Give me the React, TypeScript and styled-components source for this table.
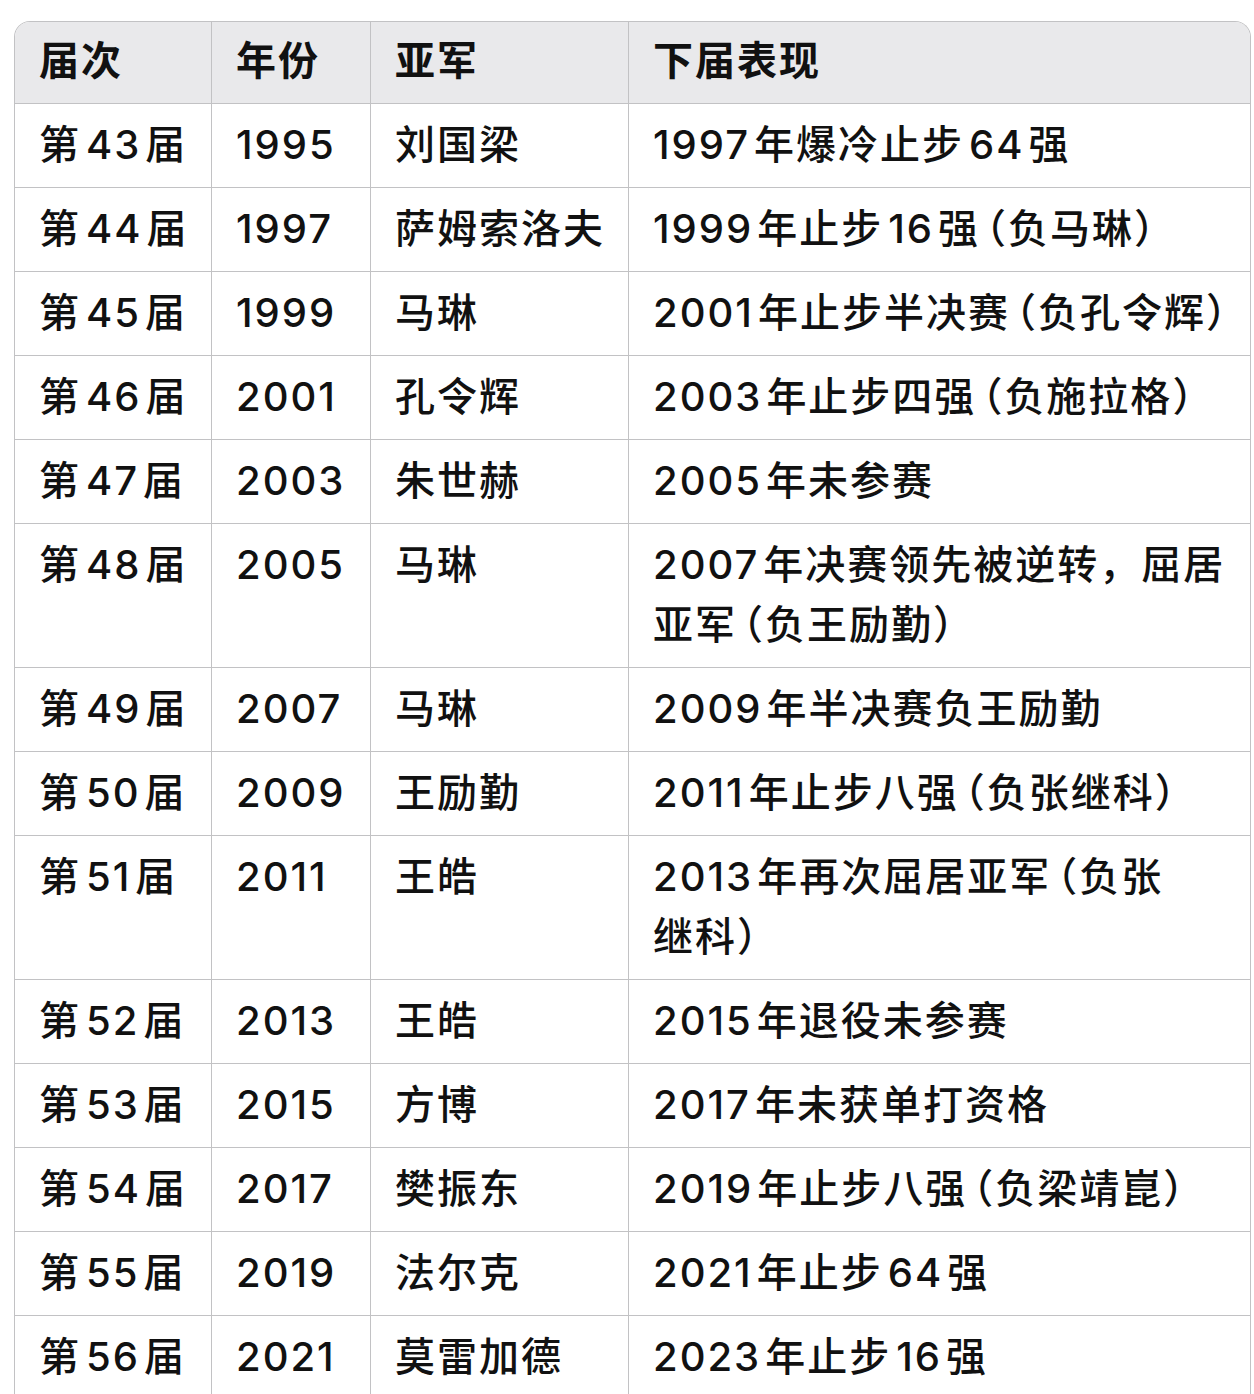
import React from "react";
import styled, { createGlobalStyle } from "styled-components";

const Global = createGlobalStyle`
  html, body { margin: 0; padding: 0; background: #ffffff; }
  body {
    font-family: "Inter", "Noto Sans CJK SC", "Noto Sans", sans-serif;
    color: #111111;
    -webkit-font-smoothing: antialiased;
  }
`;

const Page = styled.div`
  padding: 21px 4px 0 14px;
`;

const Table = styled.table`
  width: 1237px;
  table-layout: fixed;
  border-collapse: separate;
  border-spacing: 0;
  border: 1px solid #c2c2c4;
  border-bottom: none;
  border-radius: 16px 16px 0 0;
  overflow: hidden;
  font-size: 40px;
  line-height: 60px;
  letter-spacing: 2px;
`;

const Col = styled.col<{ $w?: number }>`
  width: ${(p) => (p.$w ? `${p.$w}px` : "auto")};
`;

const HeadCell = styled.th<{ $last?: boolean }>`
  background: #e9e9eb;
  text-align: left;
  font-weight: 700;
  padding: 9px 16px 12px 24px;
  border-bottom: 1px solid #c2c2c4;
  border-right: ${(p) => (p.$last ? "none" : "1px solid #c2c2c4")};
  vertical-align: middle;
`;

const Cell = styled.td<{ $last?: boolean }>`
  text-align: left;
  font-weight: 500;
  padding: 11px 14px 12px 24px;
  border-bottom: 1px solid #c2c2c4;
  border-right: ${(p) => (p.$last ? "none" : "1px solid #c2c2c4")};
  vertical-align: top;
  white-space: pre-line;
`;

const Num = styled.span<{ $l?: boolean; $r?: boolean }>`
  margin-left: ${(p) => (p.$l ? "5px" : "0")};
  margin-right: ${(p) => (p.$r ? "4px" : "0")};
`;

const Paren = styled.span<{ $open?: boolean }>`
  font-feature-settings: "halt" 1;
  margin-left: ${(p) => (p.$open ? "6px" : "0")};
`;

function Spaced({ text }: { text: string }) {
  const parts = text.split(/(\d+|（|）)/).filter((s) => s.length > 0);
  return (
    <>
      {parts.map((p, i) => {
        if (/^\d+$/.test(p)) {
          return (
            <Num key={i} $l={i > 0} $r={i < parts.length - 1}>
              {p}
            </Num>
          );
        }
        if (p === "（" || p === "）") {
          return (
            <Paren key={i} $open={p === "（"}>
              {p}
            </Paren>
          );
        }
        return <React.Fragment key={i}>{p}</React.Fragment>;
      })}
    </>
  );
}

const rows: [string, string, string, string][] = [
  ["第43届", "1995", "刘国梁", "1997年爆冷止步64强"],
  ["第44届", "1997", "萨姆索洛夫", "1999年止步16强（负马琳）"],
  ["第45届", "1999", "马琳", "2001年止步半决赛（负孔令辉）"],
  ["第46届", "2001", "孔令辉", "2003年止步四强（负施拉格）"],
  ["第47届", "2003", "朱世赫", "2005年未参赛"],
  ["第48届", "2005", "马琳", "2007年决赛领先被逆转，屈居\n亚军（负王励勤）"],
  ["第49届", "2007", "马琳", "2009年半决赛负王励勤"],
  ["第50届", "2009", "王励勤", "2011年止步八强（负张继科）"],
  ["第51届", "2011", "王皓", "2013年再次屈居亚军（负张\n继科）"],
  ["第52届", "2013", "王皓", "2015年退役未参赛"],
  ["第53届", "2015", "方博", "2017年未获单打资格"],
  ["第54届", "2017", "樊振东", "2019年止步八强（负梁靖崑）"],
  ["第55届", "2019", "法尔克", "2021年止步64强"],
  ["第56届", "2021", "莫雷加德", "2023年止步16强"],
];

const headers = ["届次", "年份", "亚军", "下届表现"];

export default function App() {
  return (
    <>
      <Global />
      <Page>
        <Table>
          <colgroup>
            <Col $w={197} />
            <Col $w={159} />
            <Col $w={258} />
            <Col />
          </colgroup>
          <thead>
            <tr>
              {headers.map((h, i) => (
                <HeadCell key={h} $last={i === headers.length - 1}>
                  {h}
                </HeadCell>
              ))}
            </tr>
          </thead>
          <tbody>
            {rows.map((r) => (
              <tr key={r[0]}>
                {r.map((c, i) => (
                  <Cell key={i} $last={i === r.length - 1}>
                    <Spaced text={c} />
                  </Cell>
                ))}
              </tr>
            ))}
          </tbody>
        </Table>
      </Page>
    </>
  );
}
